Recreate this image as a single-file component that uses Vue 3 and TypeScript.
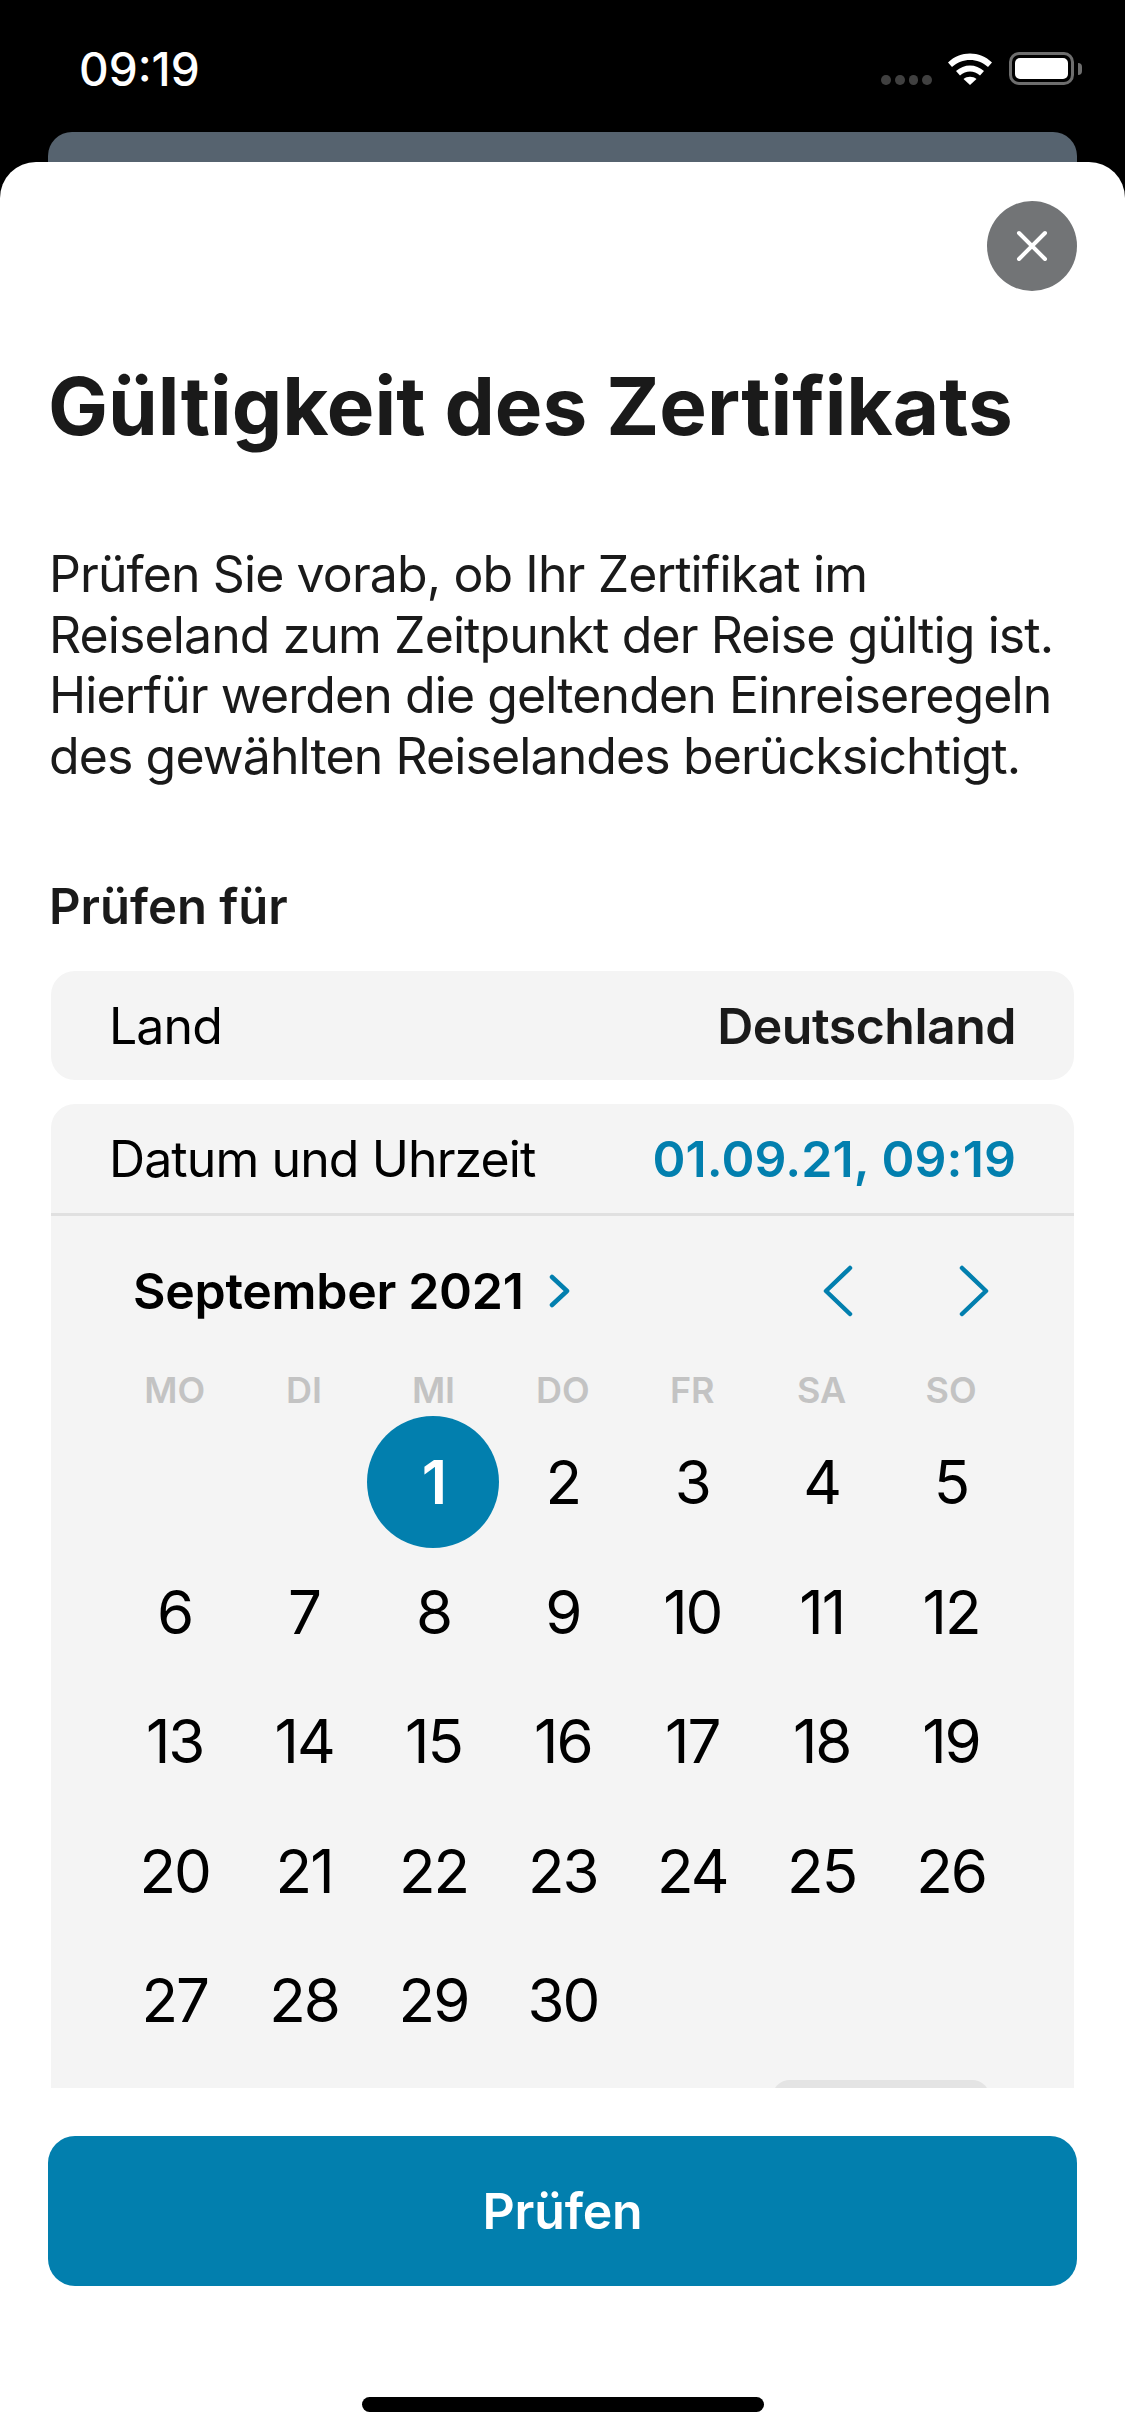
<script setup lang="ts">
const weekdays = ['MO', 'DI', 'MI', 'DO', 'FR', 'SA', 'SO']
const blanks = [0, 1]
const days = Array.from({ length: 30 }, (_, i) => i + 1)
</script>

<template>
  <div class="screen">
    <header class="status">
      <span class="time">09:19</span>
      <div class="status-icons">
        <div class="signal"><i></i><i></i><i></i><i></i></div>
        <svg class="wifi" width="46" height="33" viewBox="0 0 46 33">
          <path d="M1 10.5 C13 -1.5 33 -1.5 45 10.5 L41 15 C31 5.5 15 5.5 5 15 Z" fill="#fff" />
          <path d="M9 19 C17 11.5 29 11.5 37 19 L33 23.5 C27 18 19 18 13 23.5 Z" fill="#fff" />
          <path d="M16.5 27 C20 24 26 24 29.5 27 L23 33 Z" fill="#fff" />
        </svg>
        <div class="battery"><div class="battery-level"></div></div>
        <div class="battery-cap"></div>
      </div>
    </header>
    <div class="behind"></div>

    <main class="sheet">
      <div class="scroll">
        <div class="close-row">
          <button class="close" aria-label="Schließen">
            <svg width="32" height="32" viewBox="0 0 32 32">
              <path d="M3 3 L29 29 M29 3 L3 29" stroke="#fff" stroke-width="4" stroke-linecap="round" />
            </svg>
          </button>
        </div>
        <h1 class="title">Gültigkeit des Zertifikats</h1>
        <p class="intro">
          Prüfen Sie vorab, ob Ihr Zertifikat im<br />
          Reiseland zum Zeitpunkt der Reise gültig ist.<br />
          Hierfür werden die geltenden Einreiseregeln<br />
          des gewählten Reiselandes berücksichtigt.
        </p>
        <h2 class="subtitle">Prüfen für</h2>

        <section class="card row">
          <span>Land</span>
          <strong>Deutschland</strong>
        </section>

        <section class="card picker">
          <div class="row row-date">
            <span>Datum und Uhrzeit</span>
            <strong class="accent">01.09.21, 09:19</strong>
          </div>
          <div class="month-bar">
            <div class="month">
              <span>September 2021</span>
              <svg width="22" height="34" viewBox="0 0 22 34">
                <path d="M3 3 L18 17 L3 31" fill="none" stroke="#027fae" stroke-width="4.5" stroke-linecap="round" stroke-linejoin="round" />
              </svg>
            </div>
            <div class="month-nav">
              <svg width="32" height="52" viewBox="0 0 32 52">
                <path d="M28 3 L4 26 L28 49" fill="none" stroke="#027fae" stroke-width="4.5" stroke-linecap="round" stroke-linejoin="round" />
              </svg>
              <svg width="32" height="52" viewBox="0 0 32 52">
                <path d="M4 3 L28 26 L4 49" fill="none" stroke="#027fae" stroke-width="4.5" stroke-linecap="round" stroke-linejoin="round" />
              </svg>
            </div>
          </div>
          <div class="weekdays">
            <span v-for="d in weekdays" :key="d">{{ d }}</span>
          </div>
          <div class="days">
            <span v-for="b in blanks" :key="'b' + b"></span>
            <span v-for="d in days" :key="d" class="day" :class="{ selected: d === 1 }">{{ d }}</span>
          </div>
          <div class="time-pill"></div>
        </section>
      </div>

      <footer class="footer">
        <button class="primary">Prüfen</button>
        <div class="home"></div>
      </footer>
    </main>
  </div>
</template>

<style scoped>
.screen {
  width: 1125px;
  height: 2436px;
  display: flex;
  flex-direction: column;
  background: #000;
  overflow: hidden;
  font-family: Inter, "Liberation Sans", sans-serif;
  color: #000;
}

.status {
  height: 132px;
  flex: none;
  display: flex;
  justify-content: space-between;
  align-items: flex-start;
  padding: 42px 43px 0 79px;
  box-sizing: border-box;
}
.time {
  color: #fff;
  font-size: 46px;
  font-weight: 500;
  line-height: 54px;
}
.status-icons {
  display: flex;
  align-items: flex-end;
  padding-top: 10px;
  height: 33px;
}
.signal {
  display: flex;
  gap: 4px;
  margin-right: 15px;
}
.signal i {
  width: 9.75px;
  height: 10px;
  border-radius: 50%;
  background: #404040;
}
.wifi {
  margin-right: 16px;
}
.battery {
  width: 65px;
  height: 33px;
  box-sizing: border-box;
  border: 3px solid #6e6e6e;
  border-radius: 10px;
  padding: 3px;
}
.battery-level {
  width: 100%;
  height: 100%;
  border-radius: 5px;
  background: #fff;
}
.battery-cap {
  width: 4px;
  height: 12px;
  margin: 0 0 10px 4px;
  border-radius: 0 4px 4px 0;
  background: #6e6e6e;
}

.behind {
  height: 50px;
  flex: none;
  margin: 0 48px -20px;
  border-radius: 24px 24px 0 0;
  background: #56636f;
}

.sheet {
  position: relative;
  flex: 1;
  min-height: 0;
  display: flex;
  flex-direction: column;
  background: #fff;
  border-radius: 36px 36px 0 0;
}

.scroll {
  height: 1926px;
  flex: none;
  overflow: hidden;
  padding: 39px 51px 0;
  box-sizing: border-box;
}

.close-row {
  display: flex;
  justify-content: flex-end;
  margin-right: -3px;
}
.close {
  width: 90px;
  height: 90px;
  border: none;
  border-radius: 50%;
  padding: 0;
  background: #727476;
  display: flex;
  align-items: center;
  justify-content: center;
}

.title {
  margin: 67px 0 0 -3px;
  font-size: 80px;
  font-weight: 700;
  line-height: 96px;
  color: #1a1a1a;
  white-space: nowrap;
}

.intro {
  margin: 90px 0 0 -2px;
  font-size: 50px;
  letter-spacing: -0.9px;
  line-height: 60.6px;
  color: #1a1a1a;
  white-space: nowrap;
}

.subtitle {
  margin: 91px 0 0 -2px;
  font-size: 49px;
  font-weight: 600;
  line-height: 60px;
  color: #1a1a1a;
}

.card {
  background: #f4f4f4;
  border-radius: 24px;
}

.row {
  display: flex;
  justify-content: space-between;
  align-items: center;
  height: 109px;
  padding: 0 58px;
  box-sizing: border-box;
  font-size: 50px;
  letter-spacing: -0.9px;
  line-height: 60px;
  white-space: nowrap;
}
.row strong {
  font-weight: 600;
  color: #1a1a1a;
  letter-spacing: -0.5px;
}
.row strong.accent {
  color: #027fae;
  letter-spacing: 0.1px;
}

section.row {
  margin-top: 34px;
}

.picker {
  position: relative;
  margin-top: 24px;
  height: 1100px;
  overflow: hidden;
}
.row-date {
  border-bottom: 3px solid #e0e0e0;
  height: 112px;
}

.month-bar {
  display: flex;
  justify-content: space-between;
  align-items: center;
  height: 100px;
  margin-top: 25px;
  padding: 0 84px 0 82px;
}
.month {
  display: flex;
  align-items: center;
  gap: 26px;
  font-size: 50px;
  font-weight: 600;
  letter-spacing: -0.3px;
  white-space: nowrap;
}
.month-nav {
  display: flex;
  gap: 104px;
}

.weekdays,
.days {
  display: grid;
  grid-template-columns: repeat(7, 129.4px);
  padding-left: 59px;
}
.weekdays {
  margin-top: 25px;
  height: 48px;
  align-items: center;
  text-align: center;
  font-size: 36px;
  font-weight: 600;
  color: #c3c3c3;
}
.days {
  grid-auto-rows: 129.5px;
  margin-top: 3px;
}
.day {
  display: flex;
  align-items: center;
  justify-content: center;
  font-size: 60px;
  letter-spacing: -2px;
  position: relative;
  z-index: 0;
}
.day.selected {
  color: #fff;
  font-weight: 600;
}
.day.selected::before {
  content: "";
  position: absolute;
  z-index: -1;
  left: 50%;
  top: 50%;
  width: 132px;
  height: 132px;
  transform: translate(-50%, -50%);
  border-radius: 50%;
  background: #027fae;
}

.time-pill {
  position: absolute;
  left: 721px;
  top: 976px;
  width: 218px;
  height: 60px;
  border-radius: 18px;
  background: #e4e4e4;
}

.footer {
  flex: 1;
  display: flex;
  flex-direction: column;
  align-items: center;
  padding: 48px 48px 0;
}
.primary {
  width: 100%;
  height: 150px;
  border: none;
  border-radius: 27px;
  background: #027fae;
  color: #fff;
  font-family: inherit;
  font-size: 50px;
  font-weight: 600;
  letter-spacing: -0.2px;
}
.home {
  width: 402px;
  height: 15px;
  margin-top: 111px;
  border-radius: 8px;
  background: #000;
}
</style>
